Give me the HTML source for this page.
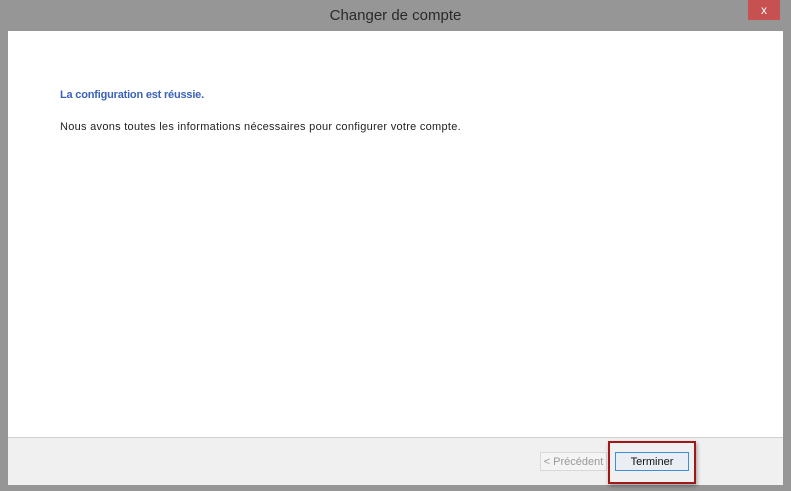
<!DOCTYPE html>
<html><head><style>
body{margin:0;width:791px;height:491px;background:#969696;position:relative;overflow:hidden;font-family:"Liberation Sans",sans-serif}
.title{position:absolute;top:7px;left:0;width:791px;text-align:center;font-size:15px;color:#2a2a2a}
.close{position:absolute;left:748px;top:0;width:32px;height:20px;background:#c75050;color:#fff;font-size:12px;text-align:center;line-height:20px}
.content{position:absolute;left:8px;top:31px;width:775px;height:406px;background:#fff}
.footer{position:absolute;left:8px;top:437px;width:775px;height:47px;background:#f0f0f0;border-top:1px solid #d0d0d0}
.h{position:absolute;left:60px;top:89px;font-size:11px;font-weight:bold;color:#3b63b8;letter-spacing:-0.2px}
.p{position:absolute;left:60px;top:121px;font-size:11px;color:#222;letter-spacing:0.28px}
.btn{position:absolute;top:452px;height:19px;font-size:11px;line-height:19px;text-align:center;box-sizing:border-box}
.prev{left:540px;width:67px;border:1px solid #d8d8d8;color:#999;background:#f4f4f4}
.term{left:615px;width:74px;border:1px solid #3c8fd8;color:#111;background:#e9eef4}
.red{position:absolute;left:608px;top:441px;width:88px;height:43px;border:2px solid #a01818;box-sizing:border-box;box-shadow:1px 2px 4px rgba(0,0,0,.35)}
</style></head><body>
<div class="title">Changer de compte</div>
<div class="close">x</div>
<div class="content"></div>
<div class="footer"></div>
<div class="h">La configuration est réussie.</div>
<div class="p">Nous avons toutes les informations nécessaires pour configurer votre compte.</div>
<div class="btn prev">&lt; Précédent</div>
<div class="red"></div>
<div class="btn term">Terminer</div>
</body></html>
